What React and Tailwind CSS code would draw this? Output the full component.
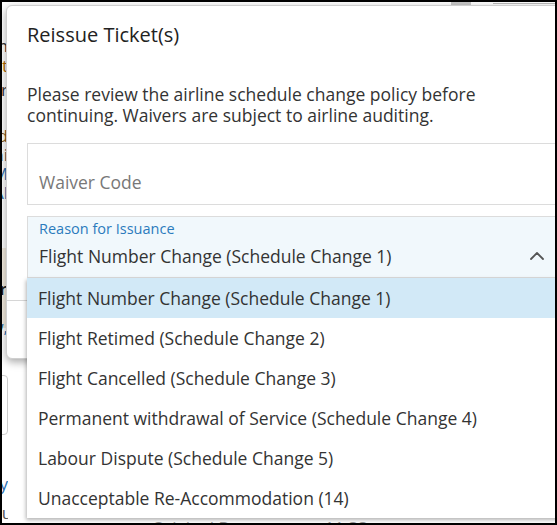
import React from 'react';

const options = [
  'Flight Number Change (Schedule Change 1)',
  'Flight Retimed (Schedule Change 2)',
  'Flight Cancelled (Schedule Change 3)',
  'Permanent withdrawal of Service (Schedule Change 4)',
  'Labour Dispute (Schedule Change 5)',
  'Unacceptable Re-Accommodation (14)',
];

// Slivers of the page that sits behind the dialog (left edge only)
const behind = [
  { t: 'Itinerary m', c: 'text-[#333]', mt: 'mt-[34px]' },
  { t: 'Depart t', c: 'text-[#b36b00]', mt: 'mt-[1px]' },
  { t: 'Carrier r', c: 'text-[#333]', mt: 'mt-[5px]' },
  { t: 'Record d', c: 'text-[#8a5a1a]', mt: 'mt-[27px]' },
  { t: 'Archi', c: 'text-[#555]', mt: 'mt-0' },
  { t: 'AM', c: 'text-[#2a6fb0]', mt: 'mt-0' },
  { t: 'Al', c: 'text-[#2a6fb0]', mt: 'mt-0' },
];

function ChevronUp() {
  return (
    <svg width="16" height="10" viewBox="0 0 16 10" fill="none" stroke="#555" strokeWidth="1.8" strokeLinecap="round" strokeLinejoin="round">
      <path d="M2 8 L8 2 L14 8" />
    </svg>
  );
}

export default function App() {
  const selected = 0;

  return (
    <div className="relative w-[557px] h-[525px] overflow-hidden bg-white border-2 border-black font-['Open_Sans',sans-serif]">
      {/* Page behind the dialog */}
      <div className="flex h-full text-[17px] leading-[21px]">
        <div className="w-[6px] shrink-0 flex flex-col items-end overflow-hidden">
          {behind.map((b) => (
            <span key={b.t} className={`whitespace-nowrap leading-[19px] ${b.c} ${b.mt}`}>{b.t}</span>
          ))}
          <div className="mt-[46px] w-[40px] h-[80px] bg-[#f3ecdf] flex items-center justify-end pr-[1px]">
            <span className="font-semibold text-[#222]">r</span>
          </div>
          <span className="whitespace-nowrap text-[#2a6fb0] mt-[-12px]">w,</span>
          <div className="mt-[38px] w-[30px] h-[60px] border border-[#ccc] rounded-[4px] shrink-0" />
          <span className="whitespace-nowrap text-[#2a6fb0] mt-[38px]">Any</span>
          <span className="whitespace-nowrap text-[#555] mt-[8px] mr-[-18px]">urr</span>
        </div>
        <div className="flex-1 flex flex-col">
          <div className="flex justify-end gap-[22px]">
            <div className="w-[20px] h-[3px] bg-[#c8c8c8]" />
            <div className="w-[62px] flex flex-col gap-[1px] pt-[1px]">
              <div className="h-[1px] bg-[#bbb]" />
              <div className="h-[1px] bg-[#e2e2e2]" />
            </div>
          </div>
          <div className="mt-auto flex items-start pl-[144px] h-[6px]">
            <span className="whitespace-nowrap text-[#999]">Original Departure at 11:33am</span>
          </div>
        </div>
      </div>

      {/* Dialog */}
      <div className="absolute left-[4px] top-[3px] w-[620px] h-[354px] bg-white border border-[#cfcfcf] rounded-[6px] shadow-[0_3px_8px_rgba(0,0,0,0.35)] flex flex-col">
        <div className="px-[20px] pt-[15px]">
          <h2 className="text-[20px] leading-[27px] text-[#222]">Reissue Ticket(s)</h2>
          <p className="mt-[36px] text-[17.5px] leading-[21px] text-[#333] w-[480px]">
            Please review the airline schedule change policy before continuing. Waivers are subject to airline auditing.
          </p>

          <div className="mt-[17px] h-[62px] border border-[#dcdcdc] bg-white flex items-end px-[11px] pb-[11px]">
            <span className="text-[17.5px] leading-[21px] text-[#787878]">Waiver Code</span>
          </div>

          <div className="mt-[11px] h-[62px] border border-[#dcdcdc] bg-[#f1f8fc] flex items-stretch">
            <div className="flex-1 px-[11px] pt-[3px]">
              <div className="text-[14.5px] leading-[18px] text-[#2b7bbd]">Reason for Issuance</div>
              <div className="mt-[8px] text-[17.5px] leading-[21px] text-[#333]">{options[selected]}</div>
            </div>
            <div className="w-[75px] flex items-center pt-[18px]">
              <ChevronUp />
            </div>
          </div>
        </div>
        <div className="mt-auto h-[58px] border-t border-[#d6d6d6]" />
      </div>

      {/* Open option list */}
      <ul className="absolute left-[25px] top-[276px] w-[620px] bg-white shadow-[-1px_2px_4px_rgba(0,0,0,0.3)]">
        {options.map((opt, i) => (
          <li
            key={opt}
            className={`h-[40px] flex items-center px-[11px] text-[17.5px] leading-[21px] text-[#333] ${
              i === selected ? 'bg-[#d2e9f7]' : 'bg-white'
            }`}
          >
            {opt}
          </li>
        ))}
      </ul>
    </div>
  );
}
